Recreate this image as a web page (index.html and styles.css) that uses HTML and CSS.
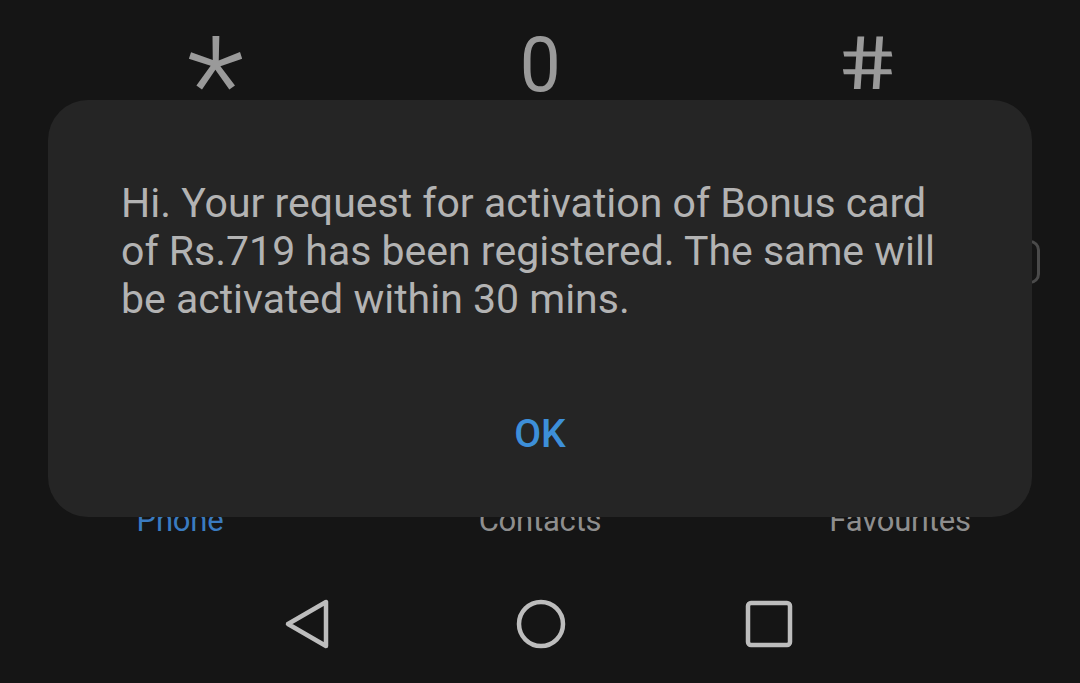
FILE: index.html
```html
<!DOCTYPE html>
<html>
<head>
<meta charset="utf-8">
<link rel="stylesheet" href="styles.css">
</head>
<body>
<div class="screen">
  <div class="keypad">
    <span class="key"><span class="sym star">*</span></span>
    <span class="key"><span class="sym zero">0</span></span>
    <span class="key"><span class="sym hash">#</span></span>
  </div>
  <div class="middle">
    <div class="side-btn"></div>
  </div>
  <div class="tabs">
    <span class="tab active">Phone</span>
    <span class="tab">Contacts</span>
    <span class="tab">Favourites</span>
  </div>
  <div class="navbar">
    <svg class="nav-icon back" width="48" height="52" viewBox="0 0 48 52"><path d="M44 4 L44 48 L6 26 Z" fill="none" stroke="#bdbdbd" stroke-width="4.5" stroke-linejoin="round"/></svg>
    <svg class="nav-icon home" width="52" height="52" viewBox="0 0 52 52"><circle cx="26" cy="26" r="22" fill="none" stroke="#bdbdbd" stroke-width="4.5"/></svg>
    <svg class="nav-icon recent" width="48" height="48" viewBox="0 0 48 48"><rect x="3" y="3" width="42" height="42" rx="3" fill="none" stroke="#bdbdbd" stroke-width="4.5"/></svg>
  </div>

  <div class="dialog">
    <p class="message">Hi. Your request for activation of Bonus card of Rs.719 has been registered. The same will be activated within 30 mins.</p>
    <div class="actions"><span class="ok">OK</span></div>
  </div>
</div>
</body>
</html>
```

FILE: styles.css
```css
* { box-sizing: border-box; }
html, body { margin: 0; padding: 0; }
body {
  background: #151515;
  font-family: Roboto, "Noto Sans", sans-serif;
  width: 1080px;
  height: 683px;
  overflow: hidden;
}
.screen {
  position: relative;
  width: 1080px;
  height: 683px;
  display: flex;
  flex-direction: column;
}
.keypad {
  display: grid;
  grid-template-columns: repeat(3, 325px);
  padding: 0 0 0 53px;
  height: 100px;
  align-items: start;
}
.key {
  display: flex;
  justify-content: center;
  color: #9a9a9a;
  line-height: 1;
}
.sym { display: block; }
.star {
  font-size: 134px;
  font-weight: 300;
  margin-top: 19px;
}
.zero {
  font-size: 76px;
  margin-top: 27px;
  transform: scaleX(0.96);
}
.hash {
  font-size: 74px;
  margin-top: 27px;
  transform: scale(1.28, 1) skewX(8deg);
}
.middle {
  height: 395px;
  display: flex;
  justify-content: flex-end;
  padding-top: 140px;
}
.side-btn {
  width: 80px;
  height: 44px;
  border: 3px solid #4a4a4a;
  border-radius: 10px;
  margin-right: 40px;
}
.tabs {
  display: grid;
  grid-template-columns: repeat(3, 1fr);
  height: 80px;
}
.tab {
  text-align: center;
  color: #8e8e8e;
  font-size: 31px;
  line-height: 1;
  margin-top: 10px;
  letter-spacing: -0.2px;
}
.tab.active { color: #3a7bc0; }
.navbar {
  flex: 1;
  display: flex;
  justify-content: center;
  align-items: center;
  padding: 0 6px 10px 0;
}
.back { margin-right: 185px; }
.home { margin-right: 178px; }
.dialog {
  position: absolute;
  left: 48px;
  top: 100px;
  width: 984px;
  height: 417px;
  background: #252525;
  border-radius: 40px;
  padding: 79px 81px 0 73px;
  display: flex;
  flex-direction: column;
}
.message {
  margin: 0;
  color: #b3b3b3;
  font-size: 41px;
  line-height: 48px;
}
.actions {
  display: flex;
  justify-content: center;
  margin-top: 90px;
  margin-right: -8px;
}
.ok {
  color: #3d8fd9;
  font-size: 39px;
  font-weight: 500;
  line-height: 1;
  margin-top: 2px;
}
```
